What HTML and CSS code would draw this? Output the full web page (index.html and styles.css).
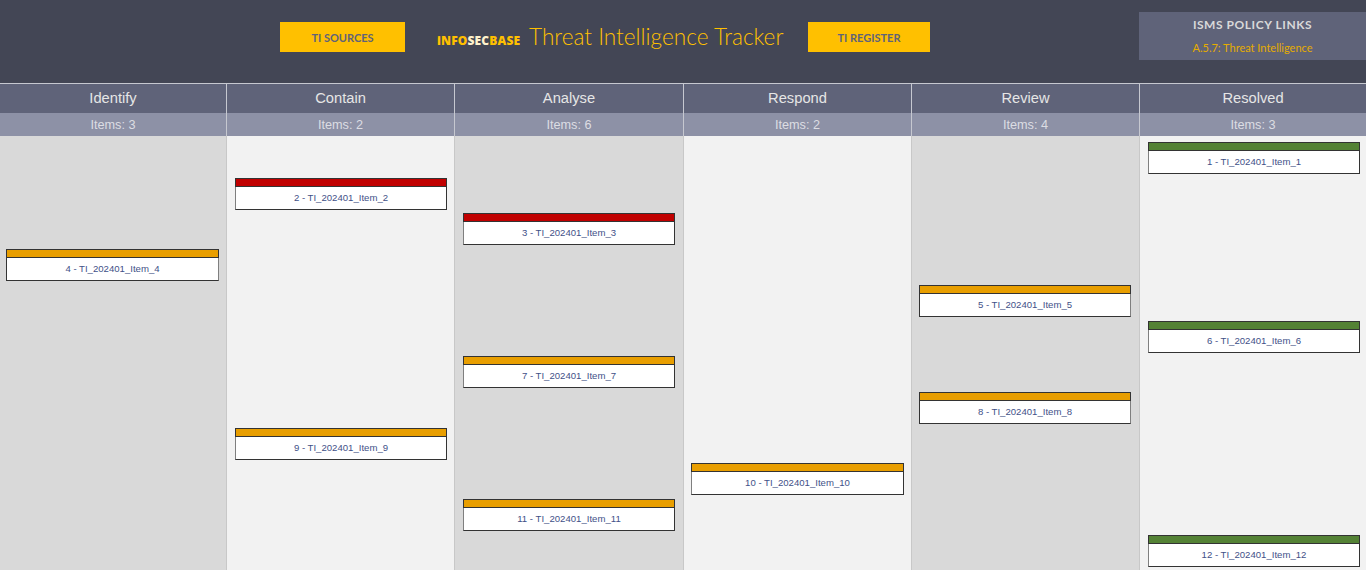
FILE: index.html
```html
<!DOCTYPE html>
<html lang="en">
<head>
<meta charset="utf-8">
<title>Threat Intelligence Tracker</title>
<link rel="stylesheet" href="styles.css">
</head>
<body>
<header class="topbar">
  <a class="btn btn-sources">TI SOURCES</a>
  <div class="brand"><span class="logo">iNFO<span class="logo-mid">SEC</span>BASE</span><h1 class="title">Threat Intelligence Tracker</h1></div>
  <a class="btn btn-register">TI REGISTER</a>
  <aside class="policy">
    <div class="policy-head">ISMS POLICY LINKS</div>
    <div class="policy-link">A.5.7: Threat Intelligence</div>
  </aside>
</header>
<main class="board">
  <div class="head c1">Identify</div><div class="head c2">Contain</div><div class="head c3">Analyse</div><div class="head c4">Respond</div><div class="head c5">Review</div><div class="head c6">Resolved</div>
  <div class="count c1">Items: 3</div><div class="count c2">Items: 2</div><div class="count c3">Items: 6</div><div class="count c4">Items: 2</div><div class="count c5">Items: 4</div><div class="count c6">Items: 3</div>
  <div class="lanes">
    <div class="lane dark c1"></div><div class="lane c2"></div><div class="lane dark c3"></div><div class="lane c4"></div><div class="lane dark c5"></div><div class="lane c6"></div>
    <div class="card c6 green" style="grid-row:1"><div class="bar"></div><div class="label">1 - TI_202401_Item_1</div></div>
    <div class="card c2 red" style="grid-row:2"><div class="bar"></div><div class="label">2 - TI_202401_Item_2</div></div>
    <div class="card c3 red" style="grid-row:3"><div class="bar"></div><div class="label">3 - TI_202401_Item_3</div></div>
    <div class="card c1 amber" style="grid-row:4"><div class="bar"></div><div class="label">4 - TI_202401_Item_4</div></div>
    <div class="card c5 amber" style="grid-row:5"><div class="bar"></div><div class="label">5 - TI_202401_Item_5</div></div>
    <div class="card c6 green" style="grid-row:6"><div class="bar"></div><div class="label">6 - TI_202401_Item_6</div></div>
    <div class="card c3 amber" style="grid-row:7"><div class="bar"></div><div class="label">7 - TI_202401_Item_7</div></div>
    <div class="card c5 amber" style="grid-row:8"><div class="bar"></div><div class="label">8 - TI_202401_Item_8</div></div>
    <div class="card c2 amber" style="grid-row:9"><div class="bar"></div><div class="label">9 - TI_202401_Item_9</div></div>
    <div class="card c4 amber" style="grid-row:10"><div class="bar"></div><div class="label">10 - TI_202401_Item_10</div></div>
    <div class="card c3 amber" style="grid-row:11"><div class="bar"></div><div class="label">11 - TI_202401_Item_11</div></div>
    <div class="card c6 green" style="grid-row:12"><div class="bar"></div><div class="label">12 - TI_202401_Item_12</div></div>
  </div>
</main>
</body>
</html>
```
FILE: styles.css
```css
* { box-sizing: border-box; }
html, body { margin: 0; height: 570px; overflow: hidden; }
body { font-family: "Liberation Sans", Arial, sans-serif; background: #f2f2f2; }

.topbar { height: 83px; background: #434655; position: relative; display: flex; align-items: flex-start; padding: 22px 0 0 280px; font-family: Lato, sans-serif; }
.btn { display: flex; align-items: center; justify-content: center; height: 30px; background: #ffc000; color: #5f6379; font-weight: 700; font-size: 11px; }
.btn-sources { width: 125px; }
.btn-register { width: 122px; margin-left: 25px; }
.brand { display: flex; align-items: baseline; width: 378px; padding-left: 32px; height: 30px; }
.logo { font-family: "Open Sans", sans-serif; font-weight: 800; font-size: 12px; color: #ffc000; letter-spacing: 0.15px; width: 92px; flex: none; }
.logo-mid { color: #fff2cc; }
.title { margin: 0; font-family: Lato, sans-serif; font-weight: 300; font-size: 22.6px; line-height: 30px; color: #ffc000; white-space: nowrap; }

.policy { position: absolute; left: 1139px; top: 12px; width: 227px; height: 48px; background: #5f6379; text-align: center; }
.policy-head { color: #d9d9d9; font-weight: 700; font-size: 12px; letter-spacing: 0.55px; line-height: 16px; margin-top: 5px; }
.policy-link { color: #e5ac00; font-size: 11px; line-height: 14px; margin-top: 8px; }

.board { display: grid; grid-template-columns: 227px 228px 229px 228px 228px 226px; grid-template-rows: 30px 23px; }
.head { border-top: 1px solid #c6c8d0; background: #5f6379; color: #e6e6e6; font-size: 14.7px; line-height: 28px; text-align: center; border-right: 1px solid #c6c8d0; }
.count { background: #8d91a6; color: #dcdde3; font-size: 12.7px; line-height: 24px; text-align: center; border-right: 1px solid #c6c8d0; }
.head.c6, .count.c6 { border-right: 0; }
.c1 { grid-column: 1; }
.c2 { grid-column: 2; }
.c3 { grid-column: 3; }
.c4 { grid-column: 4; }
.c5 { grid-column: 5; }
.c6 { grid-column: 6; }

.lanes { grid-column: 1 / -1; display: grid; grid-template-columns: 227px 228px 229px 228px 228px 226px; grid-template-rows: repeat(12, 35.72px); height: 434px; overflow: hidden; padding-top: 6px; }
.lane { grid-row: 1 / 13; margin-top: -6px; height: 440px; background: #f2f2f2; border-right: 1px solid #c8c8c8; }
.lane.dark { background: #d9d9d9; }
.lane.c6 { border-right: 0; }

.card { height: 32px; margin: 0 8px; border: 1px solid #333; background: #fff; align-self: start; }
.card.c1 { margin: 0 8px 0 6px; border-right-color: #7f7f7f; }
.card.c2 { border-left-color: #7f7f7f; }
.card.c3 { margin-right: 9px; border-left-color: #7f7f7f; }
.card.c4 { margin-left: 7px; border-left-color: #7f7f7f; }
.card.c5 { margin: 0 9px 0 7px; border-right-color: #7f7f7f; }
.card.c6 { margin-right: 6px; border-left-color: #7f7f7f; }
.bar { margin: -1px -1px 0; border: 1px solid #333; box-sizing: content-box; height: 7px; }
.amber .bar { background: #e89e00; }
.red .bar { background: #c00000; }
.green .bar { background: #548235; }
.label { text-align: center; color: #3f5188; font-size: 9.6px; line-height: 21px; }
```
